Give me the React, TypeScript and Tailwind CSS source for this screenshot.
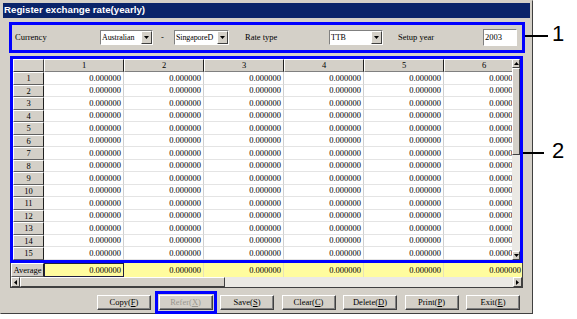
import React from 'react';

const COLS = [1, 2, 3, 4, 5, 6];
const ROWS = Array.from({ length: 15 }, (_, i) => i + 1);
const VALUE = '0.000000';

function Arrow({ dir }: { dir: 'up' | 'down' | 'left' | 'right' }) {
  const vert = dir === 'up' || dir === 'down';
  const pts = { up: '0,3 2.5,0 5,3', down: '0,0 5,0 2.5,3', left: '3,0 3,5 0,2.5', right: '0,0 0,5 3,2.5' }[dir];
  return (
    <svg width={vert ? 5 : 3} height={vert ? 3 : 5} viewBox={vert ? '0 0 5 3' : '0 0 3 5'}>
      <polygon points={pts} fill="#000" />
    </svg>
  );
}

function Select({ value, w }: { value: string; w: string }) {
  return (
    <div className={`flex h-[15px] ${w} shrink-0 border border-t-[#808080] border-l-[#808080] border-r-white border-b-white bg-white`}>
      <span className="flex-1 overflow-hidden whitespace-nowrap pl-[1px] text-[8px] leading-[13px] tracking-[-0.1px]">{value}</span>
      <span className="flex w-[11px] shrink-0 items-center justify-center border border-t-white border-l-white border-r-[#404040] border-b-[#404040] bg-[#d4d0c8]">
        <Arrow dir="down" />
      </span>
    </div>
  );
}

function Btn({ pre, hot, disabled }: { pre: string; hot: string; disabled?: boolean }) {
  return (
    <button
      className={`flex h-[15px] w-[54px] shrink-0 items-center justify-center border border-t-white border-l-white border-r-[#404040] border-b-[#404040] bg-[#d4d0c8] shadow-[inset_-1px_-1px_#808080] text-[8.5px] leading-none ${
        disabled ? 'text-[#9a978f] outline-[3px] outline-[#0000ff] outline-offset-[1px] outline' : 'text-black'
      }`}
    >
      {pre}(<span className="underline">{hot}</span>)
    </button>
  );
}

export default function App() {
  return (
    <div className="relative flex h-[319px] w-[577px] bg-white font-['Liberation_Serif',serif] text-[8.5px] text-black">
      {/* window */}
      <div className="flex h-[314px] w-[533px] flex-col border border-t-[#d4d0c8] border-l-[#d4d0c8] border-r-[#404040] border-b-[#404040] bg-[#d4d0c8] p-[2px]">
        <div className="flex h-[15px] shrink-0 items-center bg-[#0a246a] pl-[1px] font-['Liberation_Sans',sans-serif] text-[9.7px] font-bold text-white">
          Register exchange rate(yearly)
        </div>

        {/* filter panel */}
        <div className="ml-[6px] mt-[4px] flex h-[31px] w-[516px] items-center border-[3px] border-[#0000ff]">
          <span className="ml-[3px] w-[85px]">Currency</span>
          <Select value="Australian" w="w-[53px]" />
          <span className="ml-[8px] w-[4px]">-</span>
          <span className="ml-[9px]">
            <Select value="SingaporeD" w="w-[55px]" />
          </span>
          <span className="ml-[16px] w-[84px]">Rate type</span>
          <Select value="TTB" w="w-[54px]" />
          <span className="ml-[15px] w-[85px]">Setup year</span>
          <div className="h-[17px] w-[34px] border border-t-[#808080] border-l-[#808080] border-r-white border-b-white bg-white pl-[1px] leading-[15px]">
            2003
          </div>
        </div>

        {/* grid */}
        <div className="ml-[7px] mt-[3px] flex w-[513px] flex-col">
          <div className="flex h-[207px] border-[3px] border-[#0000ff]">
            <div className="flex-1 overflow-hidden">
              <div className="flex h-[13px]">
                <div className="h-full w-[31px] shrink-0 border border-t-white border-l-white border-r-[#404040] border-b-[#404040] bg-[#d4d0c8]" />
                {COLS.map((c) => (
                  <div
                    key={c}
                    className="flex h-full w-[80px] shrink-0 items-center justify-center border border-t-white border-l-white border-r-[#202020] border-b-[#808080] bg-[#d4d0c8] leading-none"
                  >
                    {c}
                  </div>
                ))}
              </div>
              {ROWS.map((r) => (
                <div key={r} className="flex h-[12.5px]">
                  <div className="flex h-full w-[31px] shrink-0 items-center justify-center border border-t-white border-l-white border-r-[#202020] border-b-[#606060] bg-[#d4d0c8] leading-none">
                    {r}
                  </div>
                  {COLS.map((c) => (
                    <div
                      key={c}
                      className="flex h-full w-[80px] shrink-0 items-center justify-end overflow-hidden border-r border-b border-r-[#d0d0d0] border-b-[#e4e4e4] bg-white pr-[2px] leading-none"
                    >
                      {VALUE}
                    </div>
                  ))}
                </div>
              ))}
            </div>
            {/* vertical scrollbar */}
            <div className="flex w-[8px] flex-col bg-[#ebe9e4]">
              <div className="flex h-[9px] items-center justify-center border border-t-white border-l-white border-r-[#404040] border-b-[#404040] bg-[#d4d0c8]">
                <Arrow dir="up" />
              </div>
              <div className="h-[87px] border border-t-white border-l-white border-r-[#404040] border-b-[#404040] bg-[#d4d0c8]" />
              <div className="flex-1" />
              <div className="flex h-[9px] items-center justify-center border border-t-white border-l-white border-r-[#404040] border-b-[#404040] bg-[#d4d0c8]">
                <Arrow dir="down" />
              </div>
            </div>
          </div>

          <div className="flex flex-col border-x border-b border-[#404040]">
            {/* average */}
            <div className="flex h-[14px] overflow-hidden">
              <div className="flex h-full w-[33px] shrink-0 items-center justify-center border border-t-white border-l-white border-r-[#202020] border-b-[#606060] bg-[#d4d0c8] leading-none">
                Average
              </div>
              {COLS.map((c) => (
                <div
                  key={c}
                  className={`flex h-full w-[80px] shrink-0 items-center justify-end bg-[#fffc9e] pr-[2px] leading-none ${
                    c === 1 ? 'border border-[#202040]' : 'border-r border-r-[#e6e2b8]'
                  }`}
                >
                  {VALUE}
                </div>
              ))}
            </div>
            {/* horizontal scrollbar */}
            <div className="flex h-[10px] bg-[#ebe9e4]">
              <div className="flex w-[9px] items-center justify-center border border-t-white border-l-white border-r-[#404040] border-b-[#404040] bg-[#d4d0c8]">
                <Arrow dir="left" />
              </div>
              <div className="w-[205px] border border-t-white border-l-white border-r-[#404040] border-b-[#404040] bg-[#d4d0c8]" />
              <div className="flex-1" />
              <div className="flex w-[9px] items-center justify-center border border-t-white border-l-white border-r-[#404040] border-b-[#404040] bg-[#d4d0c8]">
                <Arrow dir="right" />
              </div>
            </div>
          </div>
        </div>

        {/* buttons */}
        <div className="mt-[7px] flex gap-[7.5px] pl-[94px]">
          <Btn pre="Copy" hot="F" />
          <Btn pre="Refer" hot="X" disabled />
          <Btn pre="Save" hot="S" />
          <Btn pre="Clear" hot="C" />
          <Btn pre="Delete" hot="D" />
          <Btn pre="Print" hot="P" />
          <Btn pre="Exit" hot="E" />
        </div>
      </div>

      {/* callouts */}
      <div className="absolute left-[525px] top-[35px] h-[2px] w-[23px] bg-black" />
      <div className="absolute left-[552px] top-[22px] font-['Liberation_Sans',sans-serif] text-[22px] leading-[24px]">1</div>
      <div className="absolute left-[523px] top-[152px] h-[2px] w-[21px] bg-black" />
      <div className="absolute left-[552px] top-[139px] font-['Liberation_Sans',sans-serif] text-[22px] leading-[24px]">2</div>
    </div>
  );
}
